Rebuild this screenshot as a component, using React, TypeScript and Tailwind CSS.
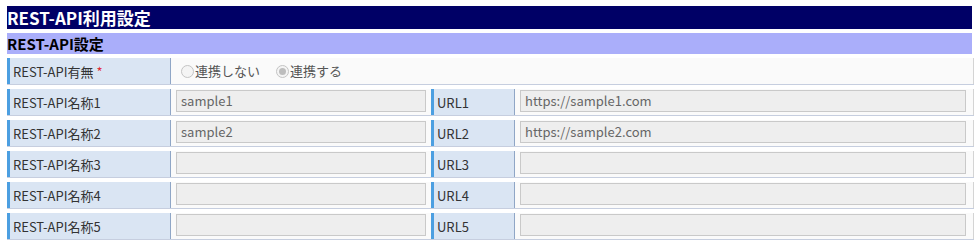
import React from "react";

const font = { fontFamily: '"Noto Sans CJK JP", "Noto Sans", sans-serif' };

function Label({ children, wide }: { children: React.ReactNode; wide?: boolean }) {
  return (
    <div
      className={`${wide ? "w-[164px]" : "w-[84px]"} shrink-0 flex items-center bg-[#dae5f3] border-l-[3px] border-l-[#4c9fe1] border-r border-r-[#8fa6c6] pl-[3px] pt-[2px] text-[13px] text-[#333]`}
    >
      {children}
    </div>
  );
}

function Input({ value, className }: { value: string; className: string }) {
  return (
    <div
      className={`${className} h-[22px] mt-[1px] bg-[#eeeeee] border border-[#c9c9c9] px-[4px] text-[13px] leading-[19px] text-[#666]`}
    >
      {value}
    </div>
  );
}

function Row({ n, name, url }: { n: number; name: string; url: string }) {
  return (
    <div className="flex h-[27px] border-b border-b-[#c6cedf] w-[967px]">
      <Label wide>REST-API名称{n}</Label>
      <div className="w-[260px] shrink-0 bg-[#fafafa] pl-[5px]">
        <Input value={name} className="w-[250px]" />
      </div>
      <Label>URL{n}</Label>
      <div className="flex-1 bg-[#fafafa] pl-[5px] border-r border-r-[#d4d4d4]">
        <Input value={url} className="w-[446px]" />
      </div>
    </div>
  );
}

export default function App() {
  const rows = [
    { name: "sample1", url: "https://sample1.com" },
    { name: "sample2", url: "https://sample2.com" },
    { name: "", url: "" },
    { name: "", url: "" },
    { name: "", url: "" },
  ];
  return (
    <div className="w-[980px] h-[246px] bg-white pl-[7px] pt-[6px]" style={font}>
      <div className="w-[965px] h-[23px] bg-[#000066] text-white font-bold text-[17px] leading-[24px]">
        REST-API利用設定
      </div>
      <div className="w-[965px] h-[21px] mt-[4px] bg-[#aaaefa] text-black font-bold text-[15px] leading-[22px]">
        REST-API設定
      </div>
      <div className="flex flex-col gap-[4px] mt-[4px]">
        <div className="flex h-[27px] border-b border-b-[#c6cedf] w-[967px]">
          <Label wide>
            REST-API有無<span className="text-[#e0303a] ml-[3px]">*</span>
          </Label>
          <div className="flex-1 bg-[#fafafa] border-r border-r-[#d4d4d4] flex items-center pl-[10px] text-[13px] text-[#555]">
            <span className="w-[13px] h-[13px] rounded-full border border-[#c4c4c4] bg-[#f4f4f4] mr-[1px]" />
            <span>連携しない</span>
            <span className="w-[13px] h-[13px] rounded-full border border-[#c4c4c4] bg-[#f4f4f4] ml-[16px] mr-[1px] flex items-center justify-center">
              <span className="w-[7px] h-[7px] rounded-full bg-[#bdbdbd]" />
            </span>
            <span>連携する</span>
          </div>
        </div>
        {rows.map((r, i) => (
          <Row key={i} n={i + 1} name={r.name} url={r.url} />
        ))}
      </div>
    </div>
  );
}
